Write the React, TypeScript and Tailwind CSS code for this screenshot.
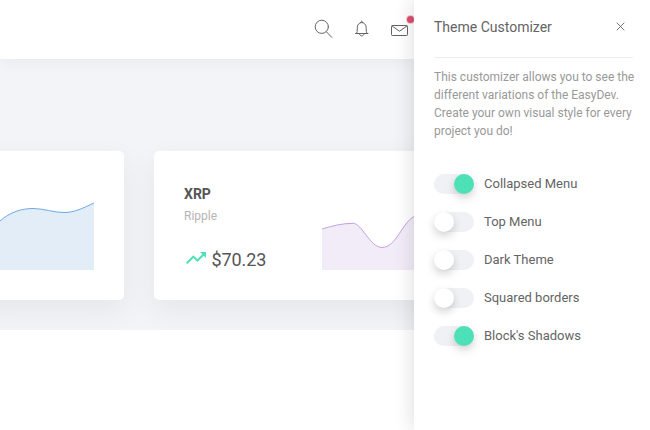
const settings = [
  { label: 'Collapsed Menu', on: true },
  { label: 'Top Menu', on: false },
  { label: 'Dark Theme', on: false },
  { label: 'Squared borders', on: false },
  { label: "Block's Shadows", on: true },
];

function Toggle({ on }: { on: boolean }) {
  return (
    <span className={`flex h-5 w-10 rounded-full bg-[#eff1f5] ${on ? 'justify-end' : 'justify-start'}`}>
      <span
        className={`size-5 rounded-full shadow-[0_4px_8px_rgba(0,0,0,0.18)] ${on ? 'bg-[#4ce1b6]' : 'bg-white'}`}
      />
    </span>
  );
}

function TopBar() {
  return (
    <header className="relative z-10 flex h-[59px] bg-white pt-[19px] pl-[314px] shadow-[0_2px_15px_rgba(0,0,0,0.05)]">
      <svg className="size-5 shrink-0" viewBox="0 0 20 20" fill="none" stroke="#646464" strokeLinecap="round">
        <circle cx="7.8" cy="7.8" r="6.6" />
        <path d="M12.400 12.800 17.800 18.400" />
      </svg>
      <svg className="ml-[18px] size-5 shrink-0" viewBox="0 0 20 20" fill="none" stroke="#646464" strokeLinecap="round" strokeLinejoin="round">
        <path d="M3.500 14.500h12.500M4.800 14.300c.3-1 .5-2.300.5-4.300V8.500C5.300 5.700 7.200 3.600 9.700 3.600s4.500 2.100 4.500 4.900V10c0 2 .3 3.300.6 4.300M8.700 3.500c0-1.800 2-1.800 2 0M7.500 14.700c0 3 4.500 3 4.500 0" />
      </svg>
      <span className="relative ml-[18px] size-5 shrink-0">
        <svg className="size-5" viewBox="0 0 20 20" fill="none" stroke="#646464" strokeLinejoin="round">
          <rect x="1.500" y="6.500" width="16" height="10" rx=".8" />
          <path d="m2 7 7.500 5.200L17 7" />
        </svg>
        <span className="absolute -top-[3.500px] left-[16.500px] size-[7px] rounded-full bg-[#da4f70] shadow-[0_0_0_1px_rgba(218,79,112,0.3)]" />
      </span>
    </header>
  );
}

function Customizer() {
  return (
    <aside className="absolute inset-y-0 right-0 z-20 w-[236px] bg-white pr-[17px] pl-5 text-[#646464] shadow-[0_0_20px_rgba(0,0,0,0.15)]">
      <div className="flex h-[58px] items-start justify-between border-b border-[#eeeeee] pt-[17px]">
        <h2 className="text-[14px] leading-[21px]">Theme Customizer</h2>
        <svg className="mt-[5px] mr-[8px] size-[9px]" viewBox="0 0 9 9" stroke="#777" strokeWidth="1">
          <path d="m.7.7 7.600 7.600m0-7.600L.7 8.300" />
        </svg>
      </div>
      <p className="mt-[10px] text-[12px] leading-[18px] whitespace-nowrap text-[#999999]">
        This customizer allows you to see the
        <br />
        different variations of the EasyDev.
        <br />
        Create your own visual style for every
        <br />
        project you do!
      </p>
      <ul className="mt-[34px] flex flex-col gap-[18px]">
        {settings.map((s) => (
          <li key={s.label} className="flex h-5 items-center gap-[10px] text-[13px] leading-5">
            <Toggle on={s.on} />
            <span>{s.label}</span>
          </li>
        ))}
      </ul>
    </aside>
  );
}

export default function App() {
  return (
    <div className="relative h-[430px] w-[650px] overflow-hidden bg-white font-[Roboto,sans-serif]">
      <TopBar />
      <main className="flex h-[271px] items-start gap-[30px] overflow-hidden bg-[#f2f4f7] pt-[92px]">
        <section className="-ml-5 h-[149px] w-[144px] shrink-0 rounded-[5px] bg-white pt-[50px] pl-5 shadow-[0_10px_30px_1px_rgba(0,0,0,0.06)]">
          <svg className="h-[69px] w-[94px]" viewBox="0 0 94 69" fill="none">
            <path d="M0 20C10 11 22 7.500 33 7.500S53 11.500 64 11.500 83 7 94 2V69H0Z" fill="#e3edf8" />
            <path d="M0 20C10 11 22 7.500 33 7.500S53 11.500 64 11.500 83 7 94 2" stroke="#70a9e1" />
          </svg>
        </section>
        <section className="flex h-[149px] w-[360px] shrink-0 rounded-[5px] bg-white pl-[30px] shadow-[0_10px_30px_1px_rgba(0,0,0,0.06)]">
          <div className="w-[138px] shrink-0 pt-[33px] text-[#555555]">
            <h3 className="text-[14px] leading-[20px] font-bold">XRP</h3>
            <p className="mt-[3px] text-[12px] leading-[18px] text-[#b5b5b5]">Ripple</p>
            <div className="mt-[21px] flex items-center">
              <svg className="-mt-[3px] mr-[3.500px] size-6" viewBox="0 0 24 24" fill="#4ce1b6">
                <path d="m16 6 2.290 2.290-4.880 4.880-4-4L2 16.590 3.410 18l6-6 4 4 6.300-6.290L22 12V6z" />
              </svg>
              <span className="text-[18px] leading-[27px] tracking-[-0.1px]">$70.23</span>
            </div>
          </div>
          <svg className="mt-[50px] h-[69px] w-[150px] shrink-0" viewBox="0 0 150 69" fill="none">
            <path d="M0 28C10 25 20 22.300 31 22.300C40 22.300 48 46.500 60 46.500C74 46.500 80 22 92 15.500C108 8 128 22 150 17V69H0Z" fill="#f2ecf8" />
            <path d="M0 28C10 25 20 22.300 31 22.300C40 22.300 48 46.500 60 46.500C74 46.500 80 22 92 15.500C108 8 128 22 150 17" stroke="#c5a0e2" />
          </svg>
        </section>
      </main>
      <Customizer />
    </div>
  );
}
